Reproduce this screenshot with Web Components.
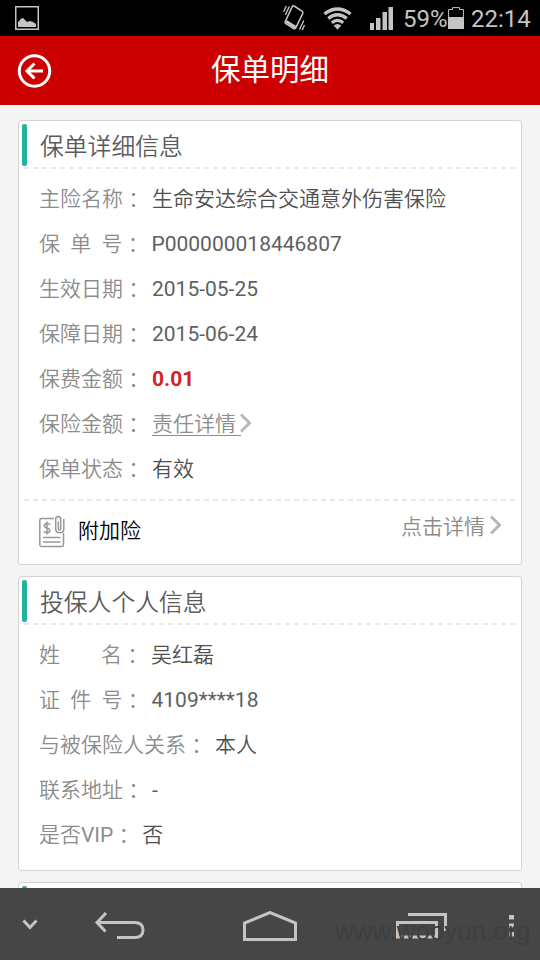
<!DOCTYPE html>
<html lang="zh-CN">
<head>
<meta charset="utf-8">
<title>保单明细</title>
<style>
  body {
    margin: 0;
    width: 540px;
    height: 960px;
    overflow: hidden;
    background: #f4f4f4;
    font-family: Roboto, "Noto Sans CJK SC", sans-serif;
  }
</style>
</head>
<body>
<policy-page>
  <status-bar slot="top" battery="59%" time="22:14"></status-bar>
  <title-bar slot="top">保单明细</title-bar>

  <info-card heading="保单详细信息">
    <info-row label="主险名称">生命安达综合交通意外伤害保险</info-row>
    <info-row label="保  单  号">P000000018446807</info-row>
    <info-row label="生效日期">2015-05-25</info-row>
    <info-row label="保障日期">2015-06-24</info-row>
    <info-row label="保费金额" kind="price">0.01</info-row>
    <info-row label="保险金额" kind="link">责任详情 </info-row>
    <info-row label="保单状态">有效</info-row>
    <extra-row slot="footer" action="点击详情">附加险</extra-row>
  </info-card>

  <info-card heading="投保人个人信息">
    <info-row label="姓        名">吴红磊</info-row>
    <info-row label="证  件  号">4109****18</info-row>
    <info-row label="与被保险人关系">本人</info-row>
    <info-row label="联系地址">-</info-row>
    <info-row label="是否VIP">否</info-row>
  </info-card>

  <info-card></info-card>

  <nav-bar slot="bottom">www.wooyun.org</nav-bar>
</policy-page>

<script>
function define(name, html, setup) {
  const template = document.createElement('template');
  template.innerHTML = html;

  customElements.define(name, class extends HTMLElement {
    constructor() {
      super();
      this.attachShadow({ mode: 'open' });
      this.shadowRoot.appendChild(template.content.cloneNode(true));
    }

    connectedCallback() {
      if (setup) setup(this, this.shadowRoot);
    }
  });
}

define('policy-page', `
  <style>
    :host {
      display: flex;
      flex-direction: column;
      width: 540px;
      height: 960px;
    }
    main {
      flex: 1;
      min-height: 0;
      overflow: hidden;
      padding: 15px 18px 0;
    }
  </style>
  <slot name="top"></slot>
  <main><slot></slot></main>
  <slot name="bottom"></slot>
`);

define('status-bar', `
  <style>
    :host {
      display: flex;
      align-items: center;
      box-sizing: border-box;
      height: 36px;
      padding: 0 9px 0 15px;
      background: #000;
      color: #c4c4c4;
      font-size: 24px;
      line-height: 36px;
    }
    svg { display: block; fill: currentColor; }
    .space { flex: 1; }
    .vibrate { margin-right: 18px; }
    .wifi { margin-right: 18px; }
    .signal { margin-right: 10px; }
    .level { width: 45px; padding-top: 2px; }
    .battery { margin-right: 7px; }
    .time { width: 60px; padding-top: 2px; }
  </style>
  <svg width="24" height="24" viewBox="0 0 24 24">
    <path d="M.75.75h22.5v22.5H.75z" fill="none" stroke="currentColor" stroke-width="1.5"/>
    <path d="M3 21v-5l4-4 1 0 4 4 3-1 3 1 3 2v3z"/>
  </svg>
  <span class="space"></span>
  <svg class="vibrate" width="22" height="26" viewBox="0 0 22 26">
    <path d="M9.300 1.500L2.300 16.500Q1.800 18 3 18.700L10.500 23.500Q12 24.200 12.800 22.800L19.700 8.500Q20.200 7 19 6.200L11.500 1.300Q10 .4 9.300 1.500z" fill="none" stroke="currentColor" stroke-width="1.6"/>
    <path d="M2.500 17.500l1.200-2.500 9.600 6-1.300 3z"/>
    <path d="M3.300 1L.6 6.800M6.400 1.500L2.300 10M20.800 15.500l-4.300 9M21.500 20l-2.300 5" fill="none" stroke="currentColor" stroke-width="1.400"/>
  </svg>
  <svg class="wifi" width="29" height="23" viewBox="0 0 29 23">
    <g fill="none" stroke="currentColor" stroke-width="3.300">
      <path d="M1.500 7Q14.500-3 27.500 7"/>
      <path d="M5.300 11.500Q14.500 4 23.700 11.500"/>
      <path d="M8.800 15.700Q14.500 11 20.200 15.700"/>
    </g>
    <path d="M10.700 18.400Q14.500 15.400 18.300 18.400L14.500 22.800z"/>
  </svg>
  <svg class="signal" width="23" height="23" viewBox="0 0 23 23">
    <path d="M0 16h4v7H0zM6 11h4.500v12H6zM12.500 5H17v18h-4.500zM18.500 0H23v23h-4.500z"/>
  </svg>
  <span class="level"></span>
  <svg class="battery" width="16" height="24" viewBox="0 0 16 24">
    <path d="M.6 12V3.500h3.900V1.600h7v1.900h3.900V12" fill="none" stroke="currentColor" stroke-width="1"/>
    <path d="M0 11h16v12H0z"/>
  </svg>
  <span class="time"></span>
`, (el, root) => {
  root.querySelector('.level').textContent = el.getAttribute('battery');
  root.querySelector('.time').textContent = el.getAttribute('time');
});

define('title-bar', `
  <style>
    :host {
      display: grid;
      grid-template-columns: 36px 1fr 36px;
      align-items: center;
      height: 69px;
      padding: 0 16px;
      background: #c00;
      color: #fff;
    }
    h1 {
      margin: 0;
      padding-bottom: 2px;
      font-size: 29.5px;
      font-weight: 400;
      line-height: 40px;
      text-align: center;
    }
  </style>
  <svg width="36" height="36" viewBox="0 0 36 36" fill="none" stroke="#fff" stroke-width="3">
    <circle cx="18.500" cy="18" r="15.200"/>
    <path d="M27 18H12M18.500 10.500L11 18l7.500 7.500"/>
  </svg>
  <h1><slot></slot></h1>
`);

define('info-card', `
  <style>
    :host {
      display: block;
      margin-bottom: 11px;
      border: 1px solid #d4d4d4;
      border-radius: 3px;
      background: #fff;
    }
    header {
      display: flex;
      align-items: center;
      height: 46px;
      margin: 0 4px 0 3px;
      gap: 13px;
    }
    .bar {
      width: 5px;
      height: 42px;
      margin-top: 2px;
      border-radius: 2px;
      background: #22b39c;
    }
    h2 {
      margin: 6px 0 0;
      color: #5c5c5c;
      font-size: 23.800px;
      font-weight: 350;
      line-height: 40px;
    }
    .dash {
      height: 2px;
      margin: 0 4px 0 5px;
      background: repeating-linear-gradient(90deg, #e8e8e8 0 5px, transparent 5px 9px);
    }
    .rows { padding: 8px 20px 7px; }
  </style>
  <header><span class="bar"></span><h2></h2></header>
  <div class="dash"></div>
  <div class="rows"><slot></slot></div>
  <slot name="footer"></slot>
`, (el, root) => {
  root.querySelector('h2').textContent = el.getAttribute('heading');
  // cards without a foot row need more room below
  if (!el.querySelector('[slot=footer]')) {
    root.querySelector('.rows').style.paddingBottom = '12px';
  }
});

define('info-row', `
  <style>
    :host {
      display: flex;
      align-items: center;
      height: 45px;
      color: #505050;
      font-size: 21px;
      line-height: 45px;
      white-space: pre;
    }
    .label { color: #8c8c8c; font-weight: 350; }
    .value { font-weight: 350; }
    .latin { font-weight: 400; }
    .value.latin { color: #606060; }
    /* colon sits in the middle of its em box */
    .colon {
      width: 29px;
      margin-top: -3px;
      color: #8c8c8c;
      font-family: "Noto Sans CJK TC", sans-serif;
      font-weight: 350;
    }
    :host([kind=price]) .value { color: #d3231f; font-weight: 700; }
    :host([kind=link]) .value {
      color: #8c8c8c;
      text-decoration: underline;
      text-decoration-thickness: 1px;
      text-underline-offset: 4px;
    }
    svg { display: none; margin: -3px 0 0 -1px; }
    :host([kind=link]) svg { display: block; }
  </style>
  <span class="label"></span><span class="colon" lang="zh-TW">：</span><span class="value"><slot></slot></span>
  <svg width="12" height="20" viewBox="0 0 12 20" fill="none" stroke="#b8b8b8" stroke-width="3"><path d="M1 1.500L9.500 10 1 18.500"/></svg>
`, (el, root) => {
  root.querySelector('.label').innerHTML = el.getAttribute('label').replace(/[A-Z]+/, '<span class="latin">$&</span>');
  if (/^[\w*.-]+$/.test(el.textContent)) root.querySelector('.value').classList.add('latin');
});

define('extra-row', `
  <style>
    :host { display: block; }
    .dash {
      height: 2px;
      margin: 0 4px 0 5px;
      background: repeating-linear-gradient(90deg, #e8e8e8 0 5px, transparent 5px 9px);
    }
    .row {
      display: flex;
      align-items: center;
      box-sizing: border-box;
      height: 63px;
      padding: 0 19px 3px 20px;
      color: #000;
      font-size: 21px;
      font-weight: 350;
      line-height: 32px;
    }
    .name { flex: 1; margin-left: 12px; }
    .action {
      margin: 0 5px 8px 0;
      color: #8c8c8c;
    }
    .arrow { margin-bottom: 12px; }
  </style>
  <div class="dash"></div>
  <div class="row">
    <svg width="27" height="33" viewBox="0 0 27 33" fill="none" stroke="#999" stroke-width="1.500">
      <path d="M15 3.500H2.500Q.8 3.500.8 5.200V29.800Q.8 31.500 2.500 31.500H22.800Q24.500 31.500 24.500 29.800V18"/>
      <path d="M4 22.500h17.500M4 27h17.500"/>
      <path d="M11 10Q10.500 8.500 8 8.500T5.300 10.700Q5.300 12.200 8 12.900T10.800 15.600Q10.800 17.800 8 17.800T5 16M8 6.500v13"/>
      <path d="M19.300 6.500v7q0 1.500 1.200 1.500t1.200-1.500V4.500Q21.700 1.500 19.200 1.500T16.700 4.500V14Q16.700 17.800 20.700 17.800T24.800 14V4"/>
    </svg>
    <span class="name"><slot></slot></span>
    <span class="action"></span>
    <svg class="arrow" width="12" height="20" viewBox="0 0 12 20" fill="none" stroke="#b8b8b8" stroke-width="3"><path d="M1 1.500L9.500 10 1 18.500"/></svg>
  </div>
`, (el, root) => {
  root.querySelector('.action').textContent = el.getAttribute('action');
});

define('nav-bar', `
  <style>
    :host {
      display: flex;
      align-items: center;
      position: relative;
      box-sizing: border-box;
      height: 72px;
      padding: 4px 26px 0 22px;
      background: #464646;
    }
    svg { display: block; flex: none; fill: none; stroke: #c4c4c4; stroke-width: 3; }
    .down { margin-top: -2px; }
    .back { margin: 0 97px 0 56px; }
    .recent { margin: 0 61px 0 99px; }
    .mark {
      position: absolute;
      left: 335px;
      top: 28px;
      color: #3f3f3f;
      font: 25.900px/30px "Liberation Sans", sans-serif;
    }
  </style>
  <svg class="down" width="16" height="12" viewBox="0 0 16 12"><path d="M1.500 1.500L8 8.500l6.500-7"/></svg>
  <svg class="back" width="52" height="28" viewBox="0 0 52 28">
    <path d="M3 10.500h37.500Q49 10.500 49 18T40.500 25.500H23M12 1L3 10.500l8.500 9"/>
  </svg>
  <svg width="54" height="30" viewBox="0 0 54 30"><path d="M1.500 28.500V12L27 1.500 52.500 12v16.500z"/></svg>
  <svg class="recent" width="52" height="28" viewBox="0 0 52 28">
    <path d="M1.500 10.500h39v14.500h-39zM12 2.500h37.500v16.500"/>
  </svg>
  <svg width="5" height="22" viewBox="0 0 5 22"><path d="M2.500 0v4.500M2.500 8.500v4.500M2.500 17v4.500" style="stroke-width: 5"/></svg>
  <span class="mark"><slot></slot></span>
`);
</script>
</body>
</html>
